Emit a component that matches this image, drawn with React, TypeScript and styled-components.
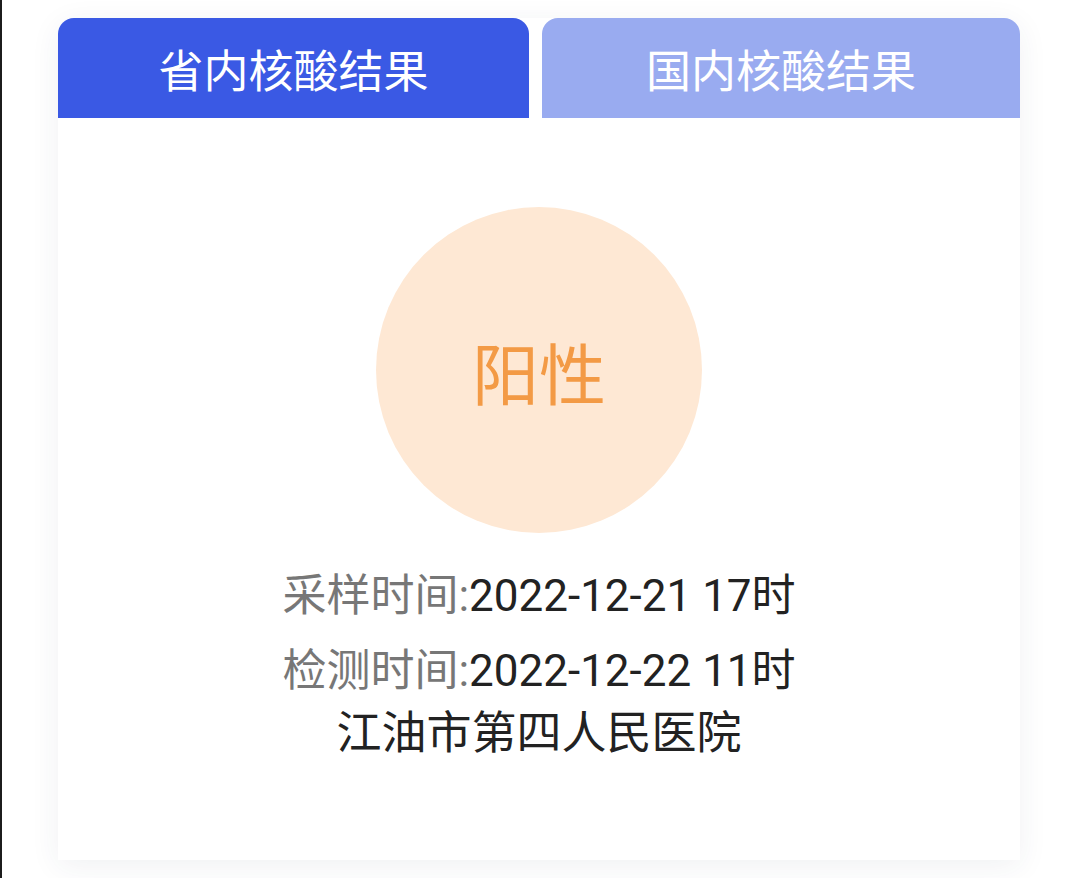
import styled, { createGlobalStyle } from "styled-components";

const GlobalStyle = createGlobalStyle`
  html, body {
    margin: 0;
    padding: 0;
    background: #ffffff;
    font-family: Roboto, "Noto Sans CJK SC", "Noto Sans", sans-serif;
  }
`

const Page = styled.div`
  box-sizing: border-box;
  width: 1080px;
  height: 878px;
  border-left: 2px solid #1c1c1c;
  padding: 18px 0 0 56px;
  overflow: hidden;
`

const Card = styled.div`
  width: 962px;
  box-shadow: 0 6px 30px rgba(40, 50, 80, 0.07);
  border-radius: 16px 16px 0 0;
`

const Tabs = styled.div`
  display: flex;
  gap: 13px;
`

const Tab = styled.div<{ active?: boolean }>`
  flex: ${(p) => (p.active ? "0 0 471px" : "1")};
  height: 100px;
  display: flex;
  align-items: center;
  justify-content: center;
  border-radius: 16px 16px 0 0;
  background: ${(p) => (p.active ? "#3a59e4" : "#99abf0")};
  color: #ffffff;
  font-size: 45px;
`

const Body = styled.div`
  height: 742px;
  background: #ffffff;
  display: flex;
  flex-direction: column;
  align-items: center;
  padding-top: 89px;
  box-sizing: border-box;
`

const Circle = styled.div`
  width: 326px;
  height: 326px;
  border-radius: 50%;
  background: #fee8d4;
  display: flex;
  align-items: center;
  justify-content: center;
  color: #f39a45;
  font-size: 67px;
`

const Row = styled.div<{ top: number; size?: number }>`
  margin-top: ${(p) => p.top}px;
  font-size: ${(p) => p.size ?? 44}px;
  line-height: 60px;
  color: #222222;
`

const Label = styled.span`
  color: #777777;
`

function App() {
  return (
    <>
      <GlobalStyle />
      <Page>
        <Card>
          <Tabs>
            <Tab active>省内核酸结果</Tab>
            <Tab>国内核酸结果</Tab>
          </Tabs>
          <Body>
            <Circle>阳性</Circle>
            <Row top={33}>
              <Label>采样时间:</Label>2022-12-21 17时
            </Row>
            <Row top={15}>
              <Label>检测时间:</Label>2022-12-22 11时
            </Row>
            <Row top={3} size={45}>江油市第四人民医院</Row>
          </Body>
        </Card>
      </Page>
    </>
  )
}

export default App
